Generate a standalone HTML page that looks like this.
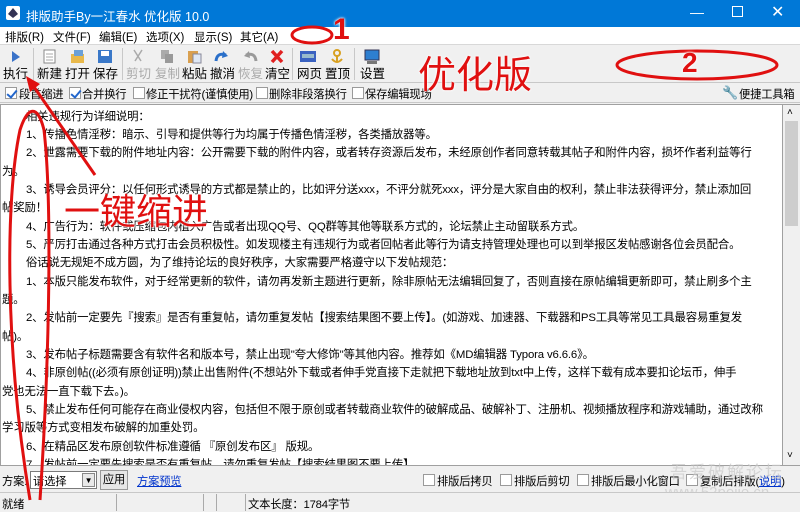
<!DOCTYPE html>
<html><head><meta charset="utf-8"><style>
*{margin:0;padding:0;box-sizing:border-box}
body{width:800px;height:511px;overflow:hidden;position:relative;background:#f0f0f0;font-family:"Liberation Sans","Noto Sans CJK SC",sans-serif;font-size:12px;color:#000}
.a{position:absolute;white-space:nowrap}
#title{left:0;top:0;width:800px;height:27px;background:#0078d7;color:#fff;font-size:12.5px}
#menu{left:0;top:27px;width:800px;height:18px;background:#fff;border-bottom:1px solid #d8d8d8;font-size:11.5px}
#tb{left:0;top:45px;width:800px;height:38px;background:#f0f0f0;border-bottom:1px solid #c8c8c8}
.tl{position:absolute;top:63px;font-size:12.5px}
.ic{position:absolute;top:49px;width:16px;height:15px}
.sep{position:absolute;top:48px;width:1px;height:32px;background:#c8c8c8}
.cb{position:absolute;width:12px;height:12px;border:1px solid #9a9a9a;background:#fff}
.cb.on::after{content:"";position:absolute;left:3px;top:0px;width:4px;height:8px;border:solid #2266cc;border-width:0 2px 2px 0;transform:rotate(40deg)}
.s{font-size:11.3px;letter-spacing:-0.2px}
#edit{left:0;top:104px;width:783px;height:362px;background:#fff;border:1px solid #a0a0a0;overflow:hidden}
.ln{position:absolute;left:0;font-size:11.4px;letter-spacing:-0.15px;white-space:nowrap;line-height:14px}
#sb{left:783px;top:104px;width:17px;height:362px;background:#f0f0f0;border-top:1px solid #a0a0a0;border-bottom:1px solid #a0a0a0}
.red{color:#e01010;font-weight:bold;text-shadow:0 0 2px #fff,0 0 3px #fff}
</style></head><body>
<div id="title" class="a"><svg class="a" style="left:6px;top:6px" width="14" height="14"><rect width="14" height="14" rx="2" fill="#fff"/><path d="M7 2 L12 8 L7 12 L2 8Z" fill="#335"/></svg><span class="a" style="left:26px;top:6px">排版助手By一江春水 优化版 10.0</span>
<span class="a" style="left:690px;top:4px;font-size:14px">—</span><span class="a" style="left:732px;top:6px;width:11px;height:11px;border:1px solid #fff"></span><span class="a" style="left:771px;top:2px;font-size:16px">✕</span></div>
<div id="menu" class="a"><span class="a" style="left:5px;top:2px">排版(R)</span><span class="a" style="left:53px;top:2px">文件(F)</span><span class="a" style="left:99px;top:2px">编辑(E)</span><span class="a" style="left:146px;top:2px">选项(X)</span><span class="a" style="left:194px;top:2px">显示(S)</span><span class="a" style="left:240px;top:2px">其它(A)</span></div>
<div id="tb" class="a"></div>
<svg class="ic" style="left:8px"><path d="M4 2 L12 8 L4 13Z" fill="#3b73c8"/></svg>
<svg class="ic" style="left:42px"><rect x="2" y="1" width="11" height="13" fill="#fff" stroke="#888"/><path d="M4 5h7M4 8h7M4 11h7" stroke="#aaa"/></svg>
<svg class="ic" style="left:70px"><rect x="1" y="5" width="13" height="9" fill="#e8b84a"/><rect x="4" y="1" width="9" height="6" fill="#6aa0d8"/></svg>
<svg class="ic" style="left:97px"><rect x="1" y="1" width="14" height="13" fill="#3a78c8"/><rect x="4" y="2" width="8" height="5" fill="#fff"/></svg>
<svg class="ic" style="left:130px"><path d="M4 1 L11 12 M12 1 L5 12" stroke="#aaa" stroke-width="1.5"/></svg>
<svg class="ic" style="left:159px"><rect x="2" y="1" width="8" height="9" fill="#aaa"/><rect x="6" y="5" width="8" height="9" fill="#999"/></svg>
<svg class="ic" style="left:187px"><rect x="1" y="2" width="10" height="12" fill="#d9a050"/><rect x="6" y="5" width="8" height="9" fill="#dfe8f5" stroke="#889"/></svg>
<svg class="ic" style="left:214px"><path d="M2 12 Q3 3 12 6" stroke="#2a6fc9" stroke-width="3" fill="none"/><path d="M9 2 L14 7 L8 9Z" fill="#2a6fc9"/></svg>
<svg class="ic" style="left:242px"><path d="M14 12 Q13 3 4 6" stroke="#999" stroke-width="3" fill="none"/><path d="M7 2 L2 7 L8 9Z" fill="#999"/></svg>
<svg class="ic" style="left:269px"><path d="M3 2 L13 13 M13 2 L3 13" stroke="#e02020" stroke-width="3.5"/></svg>
<svg class="ic" style="left:300px"><rect x="0" y="2" width="16" height="11" fill="#3a62c0"/><rect x="2" y="5" width="12" height="4" fill="#9bc"/></svg>
<svg class="ic" style="left:329px"><circle cx="8" cy="4" r="3" fill="none" stroke="#d8a020" stroke-width="2"/><path d="M8 7v6M3 10 Q8 16 13 10" stroke="#d8a020" stroke-width="2" fill="none"/></svg>
<svg class="ic" style="left:364px"><rect x="1" y="1" width="14" height="10" fill="#2e7fd0" stroke="#335"/><rect x="3" y="12" width="10" height="3" fill="#777"/></svg>
<span class="tl" style="left:3px">执行</span><span class="tl" style="left:37px">新建</span><span class="tl" style="left:65px">打开</span><span class="tl" style="left:93px">保存</span><span class="tl" style="left:126px;color:#aaa">剪切</span><span class="tl" style="left:155px;color:#aaa">复制</span><span class="tl" style="left:182px">粘贴</span><span class="tl" style="left:210px">撤消</span><span class="tl" style="left:238px;color:#aaa">恢复</span><span class="tl" style="left:265px">清空</span><span class="tl" style="left:297px">网页</span><span class="tl" style="left:325px">置顶</span><span class="tl" style="left:360px">设置</span>
<div class="sep" style="left:33px"></div><div class="sep" style="left:122px"></div><div class="sep" style="left:292px"></div><div class="sep" style="left:354px"></div>
<div class="cb on" style="left:5px;top:87px"></div><span class="a s" style="left:19px;top:86px">段首缩进</span>
<div class="cb on" style="left:69px;top:87px"></div><span class="a s" style="left:82px;top:86px">合并换行</span>
<div class="cb" style="left:133px;top:87px"></div><span class="a s" style="left:146px;top:86px">修正干扰符(谨慎使用)</span>
<div class="cb" style="left:256px;top:87px"></div><span class="a s" style="left:269px;top:86px">删除非段落换行</span>
<div class="cb" style="left:352px;top:87px"></div><span class="a s" style="left:365px;top:86px">保存编辑现场</span>
<span class="a" style="left:722px;top:85px;color:#6a8ab8;font-size:13px">🔧</span><span class="a s" style="left:739px;top:86px">便捷工具箱</span>
<div class="a" style="left:0;top:102px;width:800px;height:1px;background:#c8c8c8"></div>
<div id="edit" class="a">
<div class="ln" style="top:5px;left:25px">相关违规行为详细说明：</div>
<div class="ln" style="top:23px;left:25px">1、传播色情淫秽：暗示、引导和提供等行为均属于传播色情淫秽，各类播放器等。</div>
<div class="ln" style="top:41px;left:25px">2、泄露需要下载的附件地址内容：公开需要下载的附件内容，或者转存资源后发布，未经原创作者同意转载其帖子和附件内容，损坏作者利益等行</div>
<div class="ln" style="top:60px;left:1px">为。</div>
<div class="ln" style="top:78px;left:25px">3、诱导会员评分：以任何形式诱导的方式都是禁止的，比如评分送xxx，不评分就死xxx，评分是大家自由的权利，禁止非法获得评分，禁止添加回</div>
<div class="ln" style="top:96px;left:1px">帖奖励！</div>
<div class="ln" style="top:115px;left:25px">4、广告行为：软件或压缩包内植入广告或者出现QQ号、QQ群等其他等联系方式的，论坛禁止主动留联系方式。</div>
<div class="ln" style="top:133px;left:25px">5、严厉打击通过各种方式打击会员积极性。如发现楼主有违规行为或者回帖者此等行为请支持管理处理也可以到举报区发帖感谢各位会员配合。</div>
<div class="ln" style="top:151px;left:25px">俗话说无规矩不成方圆，为了维持论坛的良好秩序，大家需要严格遵守以下发帖规范：</div>
<div class="ln" style="top:170px;left:25px">1、本版只能发布软件，对于经常更新的软件，请勿再发新主题进行更新，除非原帖无法编辑回复了，否则直接在原帖编辑更新即可，禁止刷多个主</div>
<div class="ln" style="top:188px;left:1px">题。</div>
<div class="ln" style="top:206px;left:25px">2、发帖前一定要先『搜索』是否有重复帖，请勿重复发帖【搜索结果图不要上传】。(如游戏、加速器、下载器和PS工具等常见工具最容易重复发</div>
<div class="ln" style="top:225px;left:1px">帖)。</div>
<div class="ln" style="top:243px;left:25px">3、发布帖子标题需要含有软件名和版本号，禁止出现"夸大修饰"等其他内容。推荐如《MD编辑器 Typora v6.6.6》。</div>
<div class="ln" style="top:261px;left:25px">4、非原创帖((必须有原创证明))禁止出售附件(不想站外下载或者伸手党直接下走就把下载地址放到txt中上传，这样下载有成本要扣论坛币，伸手</div>
<div class="ln" style="top:280px;left:1px">党也无法一直下载下去。)。</div>
<div class="ln" style="top:298px;left:25px">5、禁止发布任何可能存在商业侵权内容，包括但不限于原创或者转载商业软件的破解成品、破解补丁、注册机、视频播放程序和游戏辅助，通过改称</div>
<div class="ln" style="top:316px;left:1px">学习版等方式变相发布破解的加重处罚。</div>
<div class="ln" style="top:335px;left:25px">6、在精品区发布原创软件标准遵循 『原创发布区』 版规。</div>
<div class="ln" style="top:353px;left:25px">7、发帖前一定要先搜索是否有重复帖，请勿重复发帖【搜索结果图不要上传】。</div>
</div>
<div id="sb" class="a"><span class="a" style="left:4px;top:2px;font-size:10px">˄</span><div class="a" style="left:2px;top:16px;width:13px;height:105px;background:#cdcdcd"></div><span class="a" style="left:4px;top:345px;font-size:10px">˅</span></div>
<span class="a s" style="left:2px;top:473px">方案:</span>
<div class="a s" style="left:30px;top:471px;width:67px;height:18px;background:#fff;border:1px solid #7a7a7a"><span class="a" style="left:2px;top:1px">请选择</span><span class="a" style="left:51px;top:1px;width:13px;height:14px;border:1px solid #888;background:#e8e8e8;font-size:8px;text-align:center;line-height:13px">▼</span></div>
<div class="a s" style="left:100px;top:470px;width:28px;height:20px;border:1px solid #999;background:#e6e6e6;text-align:center;line-height:18px">应用</div>
<span class="a s" style="left:137px;top:473px;color:#0033cc;text-decoration:underline">方案预览</span>
<div class="cb" style="left:423px;top:474px"></div><span class="a s" style="left:437px;top:473px">排版后拷贝</span>
<div class="cb" style="left:500px;top:474px"></div><span class="a s" style="left:514px;top:473px">排版后剪切</span>
<div class="cb" style="left:577px;top:474px"></div><span class="a s" style="left:591px;top:473px">排版后最小化窗口</span>
<div class="cb" style="left:686px;top:474px"></div><span class="a s" style="left:700px;top:473px">复制后排版(<u style="color:#0033cc">说明</u>)</span>
<span class="a" style="left:670px;top:458px;font-size:17px;color:rgba(200,200,200,.7);letter-spacing:2px">吾爱破解论坛</span>
<span class="a" style="left:665px;top:484px;font-size:15px;color:rgba(200,200,200,.7)">www.52pojie.cn</span>
<div class="a" style="left:0;top:492px;width:800px;height:19px;background:#f0f0f0;border-top:1px solid #c8c8c8"></div>
<span class="a s" style="left:2px;top:496px">就绪</span>
<div class="a" style="left:116px;top:494px;width:1px;height:17px;background:#aaa"></div>
<div class="a" style="left:203px;top:494px;width:1px;height:17px;background:#aaa"></div>
<div class="a" style="left:216px;top:494px;width:1px;height:17px;background:#aaa"></div>
<div class="a" style="left:245px;top:494px;width:1px;height:17px;background:#aaa"></div>
<span class="a s" style="left:248px;top:496px">文本长度：1784字节</span>
<svg class="a" style="left:0;top:0" width="800" height="511">
<g fill="none" stroke="#e01010" stroke-width="3">
<ellipse cx="312" cy="35" rx="20" ry="8"/>
<ellipse cx="697" cy="65" rx="80" ry="14"/>
<path d="M30 500 C5 350 5 200 20 130 C28 105 38 105 44 130 C52 200 50 350 40 500"/>
<path d="M95 175 L32 84"/>
</g>
<path d="M26 76 L40 84 L30 92Z" fill="#e01010"/>
</svg>
<span class="a red" style="left:333px;top:13px;font-size:30px">1</span>
<span class="a red" style="left:682px;top:47px;font-size:28px">2</span>
<span class="a red" style="left:418px;top:44px;font-size:38px;font-weight:normal">优化版</span>
<span class="a red" style="left:64px;top:183px;font-size:36px;font-weight:normal">一键缩进</span>
</body></html>
